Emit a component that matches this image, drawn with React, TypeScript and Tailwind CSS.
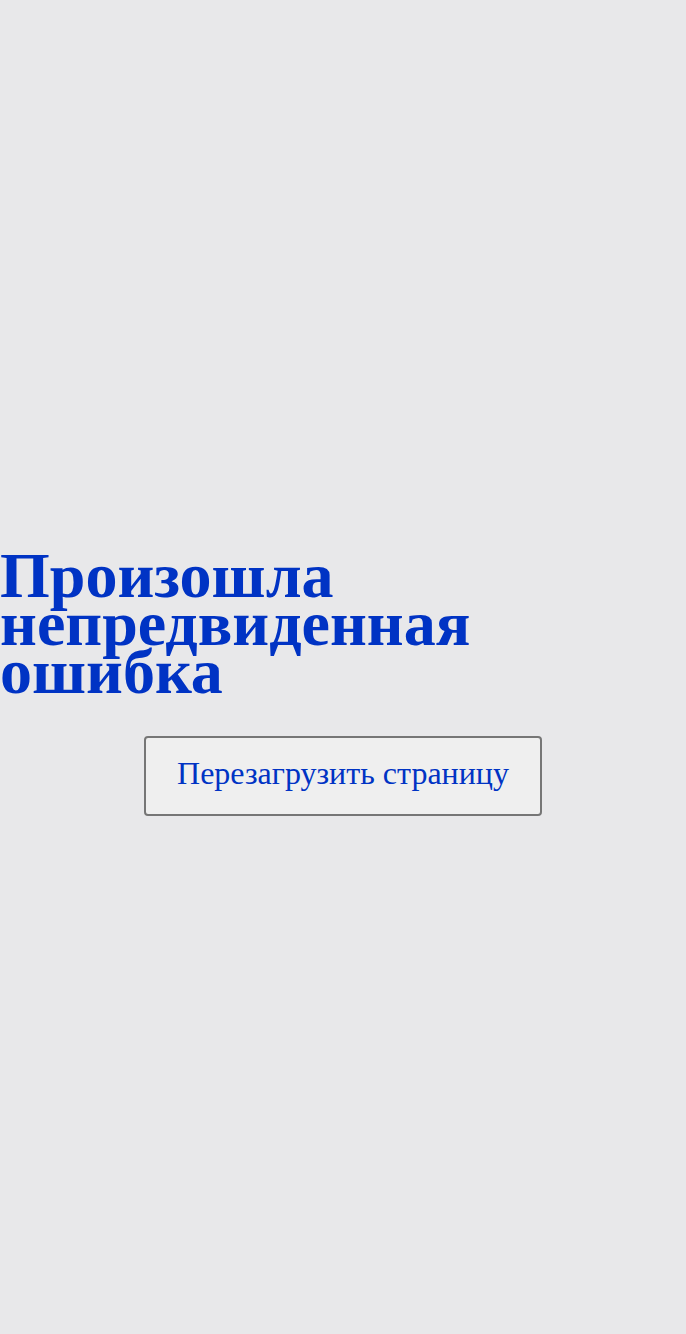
export default function App() {
  return (
    <div className="min-h-[1334px] w-[686px] bg-[#e8e8ea] flex flex-col pt-[552px]" style={{ fontFamily: '"Liberation Serif", serif' }}>
      <h1 className="text-[64px] leading-[48px] font-bold text-[#0033c4] m-0">Произошла непредвиденная ошибка</h1>
      <div className="flex justify-center mt-[40px]">
        <button className="w-[398px] h-[80px] border-2 border-[#767676] rounded-[4px] bg-[#efefef] text-[#0033c4] text-[32px] pb-[6px]" style={{ fontFamily: '"Liberation Serif", serif' }}>Перезагрузить страницу</button>
      </div>
    </div>
  );
}
